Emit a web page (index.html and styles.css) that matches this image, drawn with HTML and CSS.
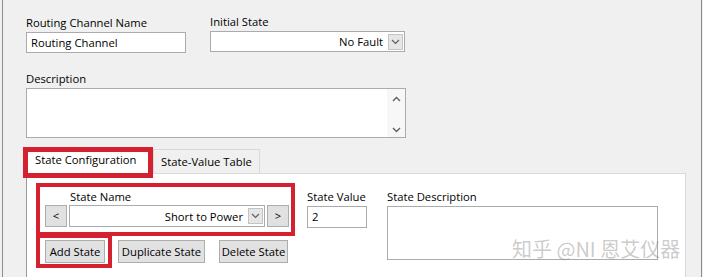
FILE: index.html
```html
<!DOCTYPE html>
<html lang="en">

<head>
  <meta charset="UTF-8">
  <title>Routing Channel</title>
  <link rel="stylesheet" href="styles.css">
</head>

<body>
  <div class="window">
    <div class="top-row">
      <div class="field name-field">
        <div class="label">Routing Channel Name</div>
        <div class="textbox">Routing Channel</div>
      </div>
      <div class="field state-field">
        <div class="label">Initial State</div>
        <div class="combo">
          <span class="combo-text">No Fault</span>
          <span class="combo-arrow">
            <svg width="9" height="6" viewBox="0 0 9 6"><path d="M1 1 L4.5 4.5 L8 1" fill="none" stroke="#606060" stroke-width="1.2"/></svg>
          </span>
        </div>
      </div>
    </div>

    <div class="field desc-field">
      <div class="label">Description</div>
      <div class="textarea">
        <div class="scroll">
          <svg width="9" height="6" viewBox="0 0 9 6"><path d="M1 5 L4.5 1.5 L8 5" fill="none" stroke="#606060" stroke-width="1.4"/></svg>
          <svg width="9" height="6" viewBox="0 0 9 6"><path d="M1 1 L4.5 4.5 L8 1" fill="none" stroke="#606060" stroke-width="1.4"/></svg>
        </div>
      </div>
    </div>

    <div class="tabs">
      <div class="tab active marked">State Configuration</div>
      <div class="tab">State-Value Table</div>
    </div>

    <div class="panel">
      <div class="left-col">
        <div class="name-group marked">
          <div class="label group-label">State Name</div>
          <div class="picker">
            <div class="btn nav">&lt;</div>
            <div class="combo picker-combo">
              <span class="combo-text">Short to Power</span>
              <span class="combo-arrow">
                <svg width="9" height="6" viewBox="0 0 9 6"><path d="M1 1 L4.5 4.5 L8 1" fill="none" stroke="#606060" stroke-width="1.2"/></svg>
              </span>
            </div>
            <div class="btn nav">&gt;</div>
          </div>
        </div>
        <div class="actions">
          <div class="add-wrap marked">
            <div class="btn action add">Add State</div>
          </div>
          <div class="btn action dup">Duplicate State</div>
          <div class="btn action del">Delete State</div>
        </div>
      </div>

      <div class="field value-field">
        <div class="label">State Value</div>
        <div class="textbox value-box">2</div>
      </div>

      <div class="field sdesc-field">
        <div class="label">State Description</div>
        <div class="sdesc-box"></div>
      </div>
    </div>

    <div class="watermark">知乎 @NI 恩艾仪器</div>
  </div>
</body>

</html>
```

FILE: styles.css
```css
body {
  margin: 0;
  padding: 0;
  background: #f0f0f0;
  font-family: "Open Sans", "Noto Sans", sans-serif;
  font-size: 11.25px;
  color: #000;
  overflow: hidden;
}

.window {
  position: relative;
  height: 277px;
  box-sizing: border-box;
  margin: 0 1px 0 2px;
  border-left: 1px solid #8c8c8c;
  border-right: 1px solid #8c8c8c;
  padding: 15px 0 0 23px;
}

.label {
  line-height: 16px;
  height: 16px;
  white-space: nowrap;
}

.top-row {
  display: flex;
}

.name-field {
  width: 160px;
}

.state-field {
  margin-left: 24px;
  margin-top: -1px;
}

.textbox {
  margin-top: 1px;
  height: 21px;
  box-sizing: border-box;
  border: 1px solid #ababab;
  background: #fff;
  padding-left: 4px;
  line-height: 19px;
}

.combo {
  margin-top: 1px;
  width: 195px;
  height: 21px;
  box-sizing: border-box;
  border: 1px solid #ababab;
  background: #fff;
  display: flex;
  align-items: center;
  justify-content: flex-end;
  padding-right: 1px;
}

.combo-text {
  margin-right: 5px;
}

.combo-arrow {
  width: 15px;
  height: 16px;
  box-sizing: border-box;
  border: 1px solid #c4c4c4;
  background: #e6e6e6;
  display: flex;
  align-items: center;
  justify-content: center;
}

.desc-field {
  margin-top: 18px;
}

.textarea {
  margin-top: 1px;
  width: 380px;
  height: 50px;
  box-sizing: border-box;
  border: 1px solid #ababab;
  background: #fff;
  display: flex;
  justify-content: flex-end;
}

.scroll {
  width: 18px;
  background: #f7f7f7;
  display: flex;
  flex-direction: column;
  align-items: center;
  justify-content: space-between;
  padding: 7px 0 4px;
}

.tabs {
  display: flex;
  align-items: flex-end;
  height: 26px;
  margin-top: 9px;
}

.tab {
  height: 24px;
  box-sizing: border-box;
  border: 1px solid #d9d9d9;
  border-bottom: none;
  padding: 3px 7px 0;
  line-height: 18px;
  white-space: nowrap;
}

.tab.active {
  height: 21px;
  width: 120px;
  margin-left: 2px;
  background: #fff;
  border: none;
  padding-top: 0;
  line-height: 16px;
}

.tab + .tab {
  margin-left: 5px;
  width: 107px;
}

.marked {
  outline: 5px solid #d4202f;
}

.name-group.marked,
.add-wrap.marked {
  outline-width: 4px;
}

.panel {
  height: 105px;
  box-sizing: border-box;
  width: 660px;
  border: 1px solid #d9d9d9;
  border-left-color: #9a9a9a;
  border-bottom: none;
  background: #fff;
  display: flex;
  padding: 13px 0 0 13px;
}

.name-group {
  padding: 2px 2px 5px 5px;
}

.group-label {
  padding-left: 25px;
}

.picker {
  display: flex;
  gap: 2px;
}

.btn {
  box-sizing: border-box;
  border: 1px solid #adadad;
  background: #e1e1e1;
  text-align: center;
  white-space: nowrap;
}

.nav {
  width: 22px;
  height: 22px;
  line-height: 20px;
}

.picker-combo {
  margin-top: 0;
  width: 196px;
  height: 22px;
}

.actions {
  display: flex;
  align-items: flex-start;
  margin-top: 6px;
}

.add-wrap {
  padding: 2px 3px 1px 5px;
}

.action {
  height: 23px;
  line-height: 21px;
}

.add {
  width: 60px;
}

.dup {
  width: 87px;
  margin: 2px 0 0 10px;
}

.del {
  width: 69px;
  margin: 2px 0 0 14px;
}

.value-field {
  margin-left: 16px;
  padding-top: 2px;
}

.value-box {
  width: 60px;
  height: 22px;
  line-height: 20px;
}

.sdesc-field {
  margin-left: 20px;
  padding-top: 2px;
}

.sdesc-box {
  margin-top: 1px;
  width: 271px;
  height: 54px;
  box-sizing: border-box;
  border: 1px solid #ababab;
  background: #fff;
}

.watermark {
  position: absolute;
  left: 509px;
  top: 234px;
  font-family: "Noto Sans CJK SC", sans-serif;
  font-size: 20px;
  color: rgba(140, 140, 140, 0.45);
  white-space: nowrap;
}
```
